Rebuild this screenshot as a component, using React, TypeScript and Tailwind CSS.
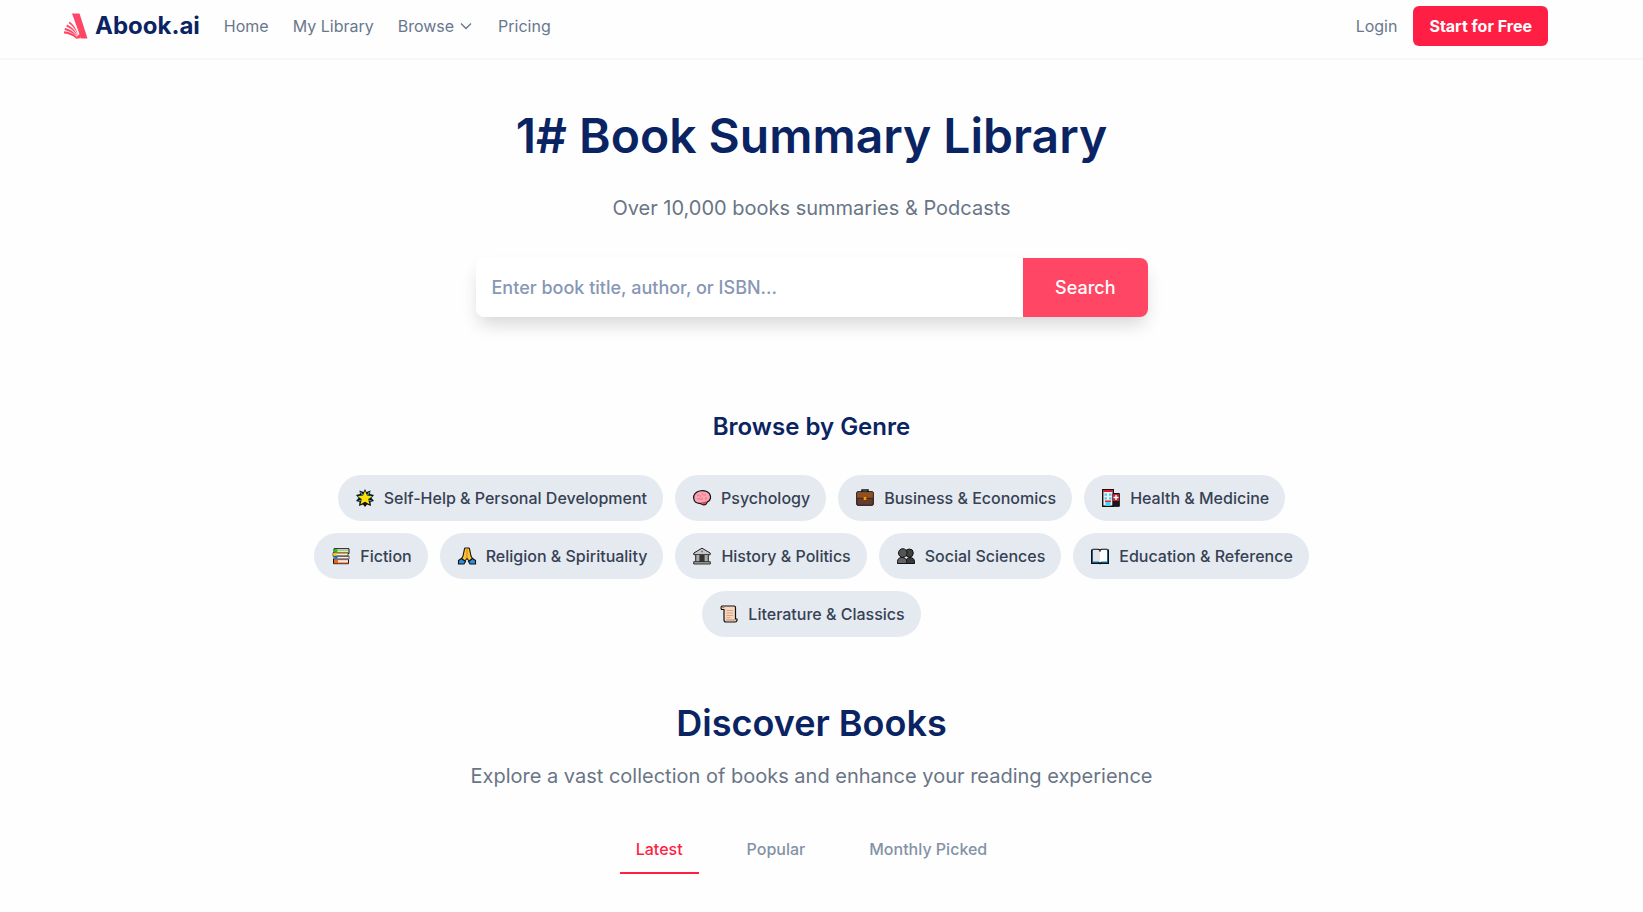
import { useState, type ReactNode } from 'react';

const icons: Record<string, ReactNode> = {
  star: (
    <>
      <path
        d="M9 0l1.500 3L14.500 1.500 14 5l4 1-2.500 3L18 12l-3.500 1 .5 4-4-1.500L9 18l-2-2.500L3 17l.5-4L0 12l2.500-3L0 6l4-1-.5-3.500L7.500 3z"
        fill="#111"
      />
      <path d="M4.500 3 6.500 6M13.500 3l-2 3M2 7.500l3 1.500M16 7.500 13 9M2.500 12l3-1M15.500 12l-3-1" stroke="#2ba6dc" strokeWidth="1.300" />
      <path d="m9 1.800 2 4.700 4.800.5-3.600 3.300 1.300 5L9 12.800l-4.500 2.500 1.300-5L2.200 7l4.800-.5z" fill="#ffe000" />
    </>
  ),
  brain: (
    <>
      <path d="M.7 9.500C0 6 3 2.800 6.500 2c5-1.300 10.500 1 11 5.500.3 3.200-1.300 4.500-3 5.300C13.500 15 12 16.500 10 15.800c-1.300-.4-2-1.500-3.500-1.500C4 14.300 1.300 13 .7 9.500z" fill="#f9a3b2" stroke="#111" strokeWidth="1.200" />
      <path d="M4 6c2 0 2 1.500 4 1M9 4c0 2 2 2 4 2M4 10c2-1 4 1 6-.5M13 8v3" stroke="#e66b80" strokeWidth=".9" />
      <path d="M7.500 13.300c2 .3 4.500-.6 6-1-.3 1.800-1.700 3.300-3.300 2.800z" fill="#e83a52" />
    </>
  ),
  briefcase: (
    <>
      <path d="M6 3.500V1h6v2.500" stroke="#111" strokeWidth="1.500" />
      <rect x=".7" y="2.700" width="16.600" height="13.600" rx="1" fill="#663b2c" stroke="#111" />
      <path d="M1.200 3.200h15.600V9H1.200z" fill="#91501f" />
      <path d="M1 9.300h16" stroke="#4a2618" />
      <path d="M7.700 8h2.600v3H7.700z" fill="#f0a000" />
    </>
  ),
  hospital: (
    <>
      <path d="M.7.700h10.600v16.600H.7z" fill="#eee" stroke="#111" strokeWidth="1.400" />
      <path d="M11 4.500h6.300v12.800H11z" fill="#16181c" stroke="#111" />
      <path d="M1.200 1.200h9.600v1.800H1.200z" fill="#e81224" />
      <path d="M11 5h6v7h-6z" fill="#c8203a" />
      <path d="M14 6v5M11.500 8.500h5" stroke="#fff" strokeWidth="1.400" />
      <path d="M2.500 4.500h2.500v2.300H2.500zM7 4.500h2.500v2.300H7zM2.500 8.300h2.500v2.300H2.500zM7 8.300h2.500v2.300H7zM3.500 13h5v4h-5z" fill="#49d0f5" />
      <path d="M3 12.200h6" stroke="#e81224" strokeWidth="1.400" />
    </>
  ),
  books: (
    <>
      <path d="M2 1.700h15v4.800H2z" fill="#f5eee5" stroke="#111" />
      <path d="M1.500 12h15v4.700h-15z" fill="#f5eee5" stroke="#111" />
      <path d="M1 5.700h15v3.500H1zM2 9h15v3.200H2z" fill="#f5eee5" stroke="#333" strokeWidth=".8" />
      <path d="M2.500 2.200h3v3h-3z" fill="#16c60c" />
      <path d="M5.500 3.700H16" stroke="#8fce6a" />
      <path d="M1.500 6h3v2.800h-3z" fill="#f7c900" />
      <path d="M4.500 6.300h11" stroke="#c5a000" />
      <path d="M2.500 9.300h3v2.600h-3z" fill="#0078d7" />
      <path d="M5.500 11.600h11" stroke="#3aa0e8" />
      <path d="M2 12.500h4v3.700H2z" fill="#f7630c" />
      <path d="M6 12.700h10.500M6 16h10.500" stroke="#e04a08" />
    </>
  ),
  pray: (
    <>
      <path d="M7.300 1h3.400c.5 0 .7.400.8.900L13 9l2 3.500-3 2.500L9 11.500 6 15l-3-2.500L5 9l1.500-7.100c.1-.5.300-.9.800-.9z" fill="#ffc233" stroke="#111" strokeWidth="1.100" />
      <path d="M9 1.500V11" stroke="#c98513" />
      <path d="M.5 13.500 3.500 11.500l4 3L6 17H.5zM17.500 13.500l-3-2-4 3L12 17h5.500z" fill="#2c8ee0" stroke="#111" strokeWidth="1.100" />
    </>
  ),
  museum: (
    <>
      <path d="M.8 6 9 1.200 17.200 6v1.700H.8z" fill="#c8c8c8" stroke="#222" />
      <path d="M2.500 8h13v6.500h-13z" fill="#d0d0d0" />
      <path d="M2.800 8v6.500M15.200 8v6.500" stroke="#222" strokeWidth="1.200" />
      <path d="M6.300 8h5.400v7H6.300z" fill="#333" />
      <path d="M5 8v7M13 8v7" stroke="#888" />
      <path d="M.7 14.700h16.600v2.300H.7z" fill="#a5a5a5" stroke="#222" strokeWidth=".9" />
      <circle cx="9" cy="4.500" r="1" fill="#777" />
    </>
  ),
  people: (
    <>
      <path d="M9 16.500v-2c0-2.500 1.500-4 4-4s4.500 1.500 4.500 4v2z" fill="#383838" stroke="#111" />
      <circle cx="12.300" cy="6" r="4" fill="#404040" stroke="#111" />
      <path d="M.5 16.500v-2c0-2.500 1.700-4 4.500-4s4.700 1.500 4.700 4v2z" fill="#636363" stroke="#111" />
      <circle cx="5.800" cy="6" r="4.300" fill="#555" stroke="#111" />
    </>
  ),
  open: (
    <>
      <path d="M.6 3h16.800v13.400H.6z" fill="#1479b8" stroke="#111" strokeWidth="1.200" />
      <path d="M2 2.300h5.500L9 3.300v12.200l-1.500-1H2z" fill="#e4e4e4" />
      <path d="M16 2.300h-5.500L9 3.300v12.200l1.500-1H16z" fill="#fff" />
      <path d="M1.500 2.300h6L9 3.300l1.500-1h6M9 3.300v1.500M7.500 15.500 9 16.700l1.500-1.200" stroke="#111" strokeWidth="1.100" />
    </>
  ),
  scroll: (
    <>
      <path d="M2 1h12c1 0 1.500.7 1.500 1.500V14H17c.3 2-.5 3-2 3H6c-1.500 0-2-1-2-2V4.500H1.500C.7 3 1 1.500 2 1z" fill="#f7d6bd" stroke="#111" strokeWidth="1.200" />
      <path d="M1.500 2.500h3M6 15h9" stroke="#b98a68" />
      <path d="M6.500 5.500H13M6.500 8H13M6.500 10.500H13M6.500 12.700h4" stroke="#cf9e7e" strokeWidth=".9" />
    </>
  ),
};

const genres = [
  { icon: 'star', label: 'Self-Help & Personal Development' },
  { icon: 'brain', label: 'Psychology' },
  { icon: 'briefcase', label: 'Business & Economics' },
  { icon: 'hospital', label: 'Health & Medicine' },
  { icon: 'books', label: 'Fiction' },
  { icon: 'pray', label: 'Religion & Spirituality' },
  { icon: 'museum', label: 'History & Politics' },
  { icon: 'people', label: 'Social Sciences' },
  { icon: 'open', label: 'Education & Reference' },
  { icon: 'scroll', label: 'Literature & Classics' },
];

const tabs = ['Latest', 'Popular', 'Monthly Picked'];

function Logo() {
  return (
    <svg viewBox="0 0 24 26" className="w-6 h-[26px]" fill="#ff4664" aria-hidden="true">
      <path d="M8 .5h7.500L23.500 25.500H17z" />
      <path d="M5.500 8.500c4 2.800 7 7.300 8.800 14.300C11.800 17 9 13 4.800 10.200z" />
      <path d="M3 11.500c4.700 2.200 8.500 6 10.800 11.700-3-4.500-6.500-7.800-11.500-9.800z" />
      <path d="M1 15c5 1.200 9.700 4.100 12.200 8.700C9.500 20.500 6 18.300.5 17z" />
      <path d="M0 18.300c5 .3 9.800 2.300 12.700 5.500l2.800-3L17 25l-4.500.8C9.300 23 5 21 0 20.600z" />
    </svg>
  );
}

function Header() {
  return (
    <header className="border-b-2 border-gray-100/70">
      <div className="flex items-center justify-between pl-16 pr-[95px] pt-1.5 pb-3">
        <nav className="flex items-center gap-6 text-[#69778d]">
          <a href="#" className="flex items-center gap-[7px] text-2xl leading-8 font-bold text-[#0a2463]">
            <Logo />
            Abook.ai
          </a>
          <a href="#">Home</a>
          <a href="#">My Library</a>
          <button className="flex items-center gap-1">
            Browse
            <svg viewBox="0 0 16 16" className="w-4 h-4" fill="none" stroke="currentColor" strokeWidth="1.400" aria-hidden="true">
              <path d="m3 5.500 5 5 5-5" />
            </svg>
          </button>
          <a href="#">Pricing</a>
        </nav>
        <div className="flex items-center gap-4">
          <a href="#" className="text-[#69778d]">Login</a>
          <a href="#" className="h-10 px-4 rounded-md bg-[#ff1f44] text-white font-bold flex items-center">
            Start for Free
          </a>
        </div>
      </div>
    </header>
  );
}

export default function App() {
  const [query, setQuery] = useState('');
  const [activeTab, setActiveTab] = useState('Latest');

  return (
    <div className="min-h-screen bg-[#fefefe] font-['Inter',sans-serif] text-base">
      <Header />

      <main className="flex flex-col items-center pr-5 text-center">
        <h1 className="mt-[46px] text-5xl leading-[60px] font-semibold text-[#0a2463]">1# Book Summary Library</h1>
        <p className="mt-7 text-xl leading-7 text-[#697586]">Over 10,000 books summaries &amp; Podcasts</p>

        {/* Search */}
        <form
          onSubmit={(e) => e.preventDefault()}
          className="mt-9 w-full max-w-2xl h-[59px] flex rounded-lg overflow-hidden shadow-[0_10px_18px_-3px_rgba(0,0,0,0.16)] bg-white text-lg font-medium"
        >
          <input
            type="text"
            aria-label="Search books"
            value={query}
            onChange={(e) => setQuery(e.target.value)}
            placeholder="Enter book title, author, or ISBN..."
            className="flex-1 px-4 text-slate-700 placeholder:text-[#8797b5] focus:outline-none"
          />
          <button type="submit" className="px-8 bg-[#ff4664] text-white">
            Search
          </button>
        </form>

        {/* Genres */}
        <h2 className="mt-24 text-2xl leading-7 font-semibold text-[#0a2463]">Browse by Genre</h2>
        <div className="mt-[34px] max-w-5xl flex flex-wrap justify-center gap-3">
          {genres.map((g) => (
            <button
              key={g.label}
              className="flex items-center gap-2 px-4 py-[11px] rounded-full bg-[#e5eaf1] text-gray-700 font-medium"
            >
              <svg viewBox="-2 0 22 18" fill="none" className="w-[22px] h-[18px]" aria-hidden="true">
                {icons[g.icon]}
              </svg>
              {g.label}
            </button>
          ))}
        </div>

        {/* Discover */}
        <h2 className="mt-16 text-4xl leading-[44px] font-semibold text-[#0a2463]">Discover Books</h2>
        <p className="mt-4 text-xl leading-[30px] text-[#697586]">
          Explore a vast collection of books and enhance your reading experience
        </p>
        <div role="tablist" className="mt-[34px] flex gap-8 font-medium">
          {tabs.map((tab) => (
            <button
              key={tab}
              role="tab"
              aria-selected={activeTab === tab}
              onClick={() => setActiveTab(tab)}
              className={`px-4 pt-3 pb-[11px] border-b-2 ${
                activeTab === tab ? 'border-[#ff1f44] text-[#ff1f44]' : 'border-transparent text-[#8492a6]'
              }`}
            >
              {tab}
            </button>
          ))}
        </div>
      </main>
    </div>
  );
}
